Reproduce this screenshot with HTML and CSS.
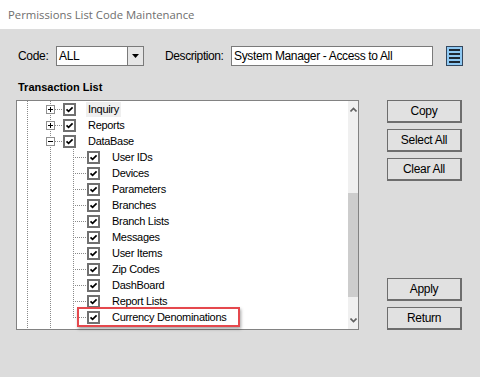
FILE: index.html
```html
<!DOCTYPE html>
<html lang="en">
<head>
    <meta charset="UTF-8">
    <title>Permissions List Code Maintenance</title>
    <link rel="stylesheet" href="styles.css">
</head>
<body>
    <div class="titlebar">Permissions List Code Maintenance</div>

    <div class="dialog">
        <div class="header">
            <span class="lbl-code">Code:</span>
            <div class="combo">
                <span class="combo-text">ALL</span>
                <span class="combo-btn">
                    <svg width="7" height="4" viewBox="0 0 7 4"><path d="M0 0h7L3.5 4z" fill="#000"/></svg>
                </span>
            </div>
            <span class="lbl-desc">Description:</span>
            <div class="textbox">System Manager - Access to All</div>
            <span class="list-icon">
                <svg width="17" height="20" viewBox="0 0 17 20">
                    <rect x="0.5" y="0.5" width="16" height="19" fill="#8ec8f2" stroke="#34475e"/>
                    <rect x="3" y="3" width="11" height="2" fill="#1d2833"/>
                    <rect x="3" y="7" width="11" height="2" fill="#1d2833"/>
                    <rect x="3" y="11" width="11" height="2" fill="#1d2833"/>
                    <rect x="3" y="15" width="11" height="2" fill="#1d2833"/>
                </svg>
            </span>
        </div>

        <div class="section-title">Transaction List</div>

        <div class="main">
            <div class="tree">
                <div class="tree-body">
                    <div class="row">
                        <span class="gut"></span>
                        <span class="branch"><svg class="exp" width="9" height="9" viewBox="0 0 9 9"><rect x="0.5" y="0.5" width="8" height="8" fill="#fff" stroke="#8f8f8f"/><path d="M2 4.5h5M4.5 2v5" stroke="#000"/></svg><i class="hline"></i></span>
                        <span class="chk"></span>
                        <span class="lbl selected">Inquiry</span>
                    </div>
                    <div class="row">
                        <span class="gut"></span>
                        <span class="branch"><svg class="exp" width="9" height="9" viewBox="0 0 9 9"><rect x="0.5" y="0.5" width="8" height="8" fill="#fff" stroke="#8f8f8f"/><path d="M2 4.5h5M4.5 2v5" stroke="#000"/></svg><i class="hline"></i></span>
                        <span class="chk"></span>
                        <span class="lbl">Reports</span>
                    </div>
                    <div class="row">
                        <span class="gut"></span>
                        <span class="branch"><svg class="exp" width="9" height="9" viewBox="0 0 9 9"><rect x="0.5" y="0.5" width="8" height="8" fill="#fff" stroke="#8f8f8f"/><path d="M2 4.5h5" stroke="#000"/></svg><i class="hline"></i></span>
                        <span class="chk"></span>
                        <span class="lbl">DataBase</span>
                    </div>
                    <div class="row"><span class="gut"></span><span class="gut"></span><span class="leaf"></span><span class="chk"></span><span class="lbl">User IDs</span></div>
                    <div class="row"><span class="gut"></span><span class="gut"></span><span class="leaf"></span><span class="chk"></span><span class="lbl">Devices</span></div>
                    <div class="row"><span class="gut"></span><span class="gut"></span><span class="leaf"></span><span class="chk"></span><span class="lbl">Parameters</span></div>
                    <div class="row"><span class="gut"></span><span class="gut"></span><span class="leaf"></span><span class="chk"></span><span class="lbl">Branches</span></div>
                    <div class="row"><span class="gut"></span><span class="gut"></span><span class="leaf"></span><span class="chk"></span><span class="lbl">Branch Lists</span></div>
                    <div class="row"><span class="gut"></span><span class="gut"></span><span class="leaf"></span><span class="chk"></span><span class="lbl">Messages</span></div>
                    <div class="row"><span class="gut"></span><span class="gut"></span><span class="leaf"></span><span class="chk"></span><span class="lbl">User Items</span></div>
                    <div class="row"><span class="gut"></span><span class="gut"></span><span class="leaf"></span><span class="chk"></span><span class="lbl">Zip Codes</span></div>
                    <div class="row"><span class="gut"></span><span class="gut"></span><span class="leaf"></span><span class="chk"></span><span class="lbl">DashBoard</span></div>
                    <div class="row"><span class="gut"></span><span class="gut"></span><span class="leaf"></span><span class="chk"></span><span class="lbl">Report Lists</span></div>
                    <div class="row">
                        <span class="gut"></span><span class="gut"></span><span class="leaf last"></span><span class="chk"></span><span class="lbl">Currency Denominations</span>
                        <span class="callout"></span>
                    </div>
                </div>
                <div class="scrollbar">
                    <div class="sb-btn">
                        <svg width="7" height="5" viewBox="0 0 7 5"><path d="M0.5 4.5L3.5 1.5L6.5 4.5" fill="none" stroke="#606060" stroke-width="1.6"/></svg>
                    </div>
                    <div class="sb-track"><div class="sb-thumb"></div></div>
                    <div class="sb-btn">
                        <svg width="7" height="5" viewBox="0 0 7 5"><path d="M0.5 0.5L3.5 3.5L6.5 0.5" fill="none" stroke="#606060" stroke-width="1.6"/></svg>
                    </div>
                </div>
            </div>

            <div class="buttons">
                <div class="btn-group">
                    <button>Copy</button>
                    <button>Select All</button>
                    <button>Clear All</button>
                </div>
                <div class="btn-group">
                    <button>Apply</button>
                    <button>Return</button>
                </div>
            </div>
        </div>
    </div>
</body>
</html>
```

FILE: styles.css
```css
body {
    margin: 0;
    width: 480px;
    height: 377px;
    background-color: #dcdcdc;
    font-family: "Liberation Sans", Arial, sans-serif;
    font-size: 12px;
    color: #000;
    overflow: hidden;
}

.titlebar {
    height: 29px;
    background-color: #fff;
    color: #6e6e6e;
    font-family: "Open Sans", sans-serif;
    font-size: 11.3px;
    line-height: 29px;
    padding-left: 8px;
}

.dialog {
    padding: 17px 0 0 16px;
}

/* Code / Description row */
.header {
    display: flex;
    align-items: center;
    height: 20px;
    padding-left: 2px;
}

.lbl-code {
    width: 38px;
    letter-spacing: -0.3px;
}

.combo {
    display: flex;
    width: 88px;
    height: 20px;
    box-sizing: border-box;
    border: 1px solid #7a7a7a;
    background-color: #fff;
}

.combo-text {
    flex: 1;
    padding-left: 2px;
    line-height: 18px;
    letter-spacing: -0.3px;
}

.combo-btn {
    width: 15px;
    border-left: 1px solid #7a7a7a;
    background-color: #e6e6e6;
    display: flex;
    align-items: center;
    justify-content: center;
}

.lbl-desc {
    width: 66px;
    margin-left: 21px;
    letter-spacing: -0.4px;
}

.textbox {
    width: 202px;
    height: 20px;
    box-sizing: border-box;
    border: 1px solid #7a7a7a;
    background-color: #fff;
    padding-left: 2px;
    line-height: 18px;
    letter-spacing: -0.35px;
}

.list-icon {
    margin-left: 13px;
    display: flex;
}

.section-title {
    font-weight: bold;
    font-size: 11px;
    line-height: 14px;
    margin: 14px 0 0 2px;
}

/* Tree + buttons */
.main {
    display: flex;
    margin-top: 6px;
}

.tree {
    display: flex;
    width: 343px;
    height: 230px;
    box-sizing: border-box;
    border: 1px solid #828282;
    background-color: #fff;
}

.tree-body {
    flex: 1;
    background-image:
        repeating-linear-gradient(to bottom, #8a8a8a 0 1px, transparent 1px 2px),
        repeating-linear-gradient(to bottom, #8a8a8a 0 1px, transparent 1px 2px);
    background-size: 1px 100%, 1px 100%;
    background-position: 10px 0, 33px 0;
    background-repeat: no-repeat;
}

.row {
    position: relative;
    display: flex;
    align-items: center;
    height: 16px;
    font-size: 11px;
    letter-spacing: -0.3px;
}

.gut {
    width: 23px;
    height: 16px;
    flex: none;
}

.branch {
    display: flex;
    align-items: center;
    width: 23px;
    height: 16px;
    flex: none;
}

.exp {
    margin-left: 6px;
    flex: none;
}

.hline {
    flex: 1;
    height: 1px;
    background-image: repeating-linear-gradient(to right, #8a8a8a 0 1px, transparent 1px 2px);
}

.leaf {
    width: 24px;
    height: 16px;
    flex: none;
    background-image:
        repeating-linear-gradient(to bottom, #8a8a8a 0 1px, transparent 1px 2px),
        repeating-linear-gradient(to right, #8a8a8a 0 1px, transparent 1px 2px);
    background-size: 1px 16px, 14px 1px;
    background-position: 10px 0, 10px 8px;
    background-repeat: no-repeat;
}

.leaf.last {
    background-size: 1px 9px, 14px 1px;
}

.chk {
    width: 13px;
    height: 13px;
    flex: none;
    box-sizing: border-box;
    border: 2px solid #707070;
    background: #fff url("data:image/svg+xml,%3Csvg xmlns='http://www.w3.org/2000/svg' width='9' height='9' viewBox='0 0 9 9'%3E%3Cpath d='M1.5 4.3L3.6 6.4L7.6 2.4' fill='none' stroke='%23000' stroke-width='1.7'/%3E%3C/svg%3E") center no-repeat;
}

.lbl {
    margin-left: 10px;
    padding: 0 2px;
    line-height: 15px;
    white-space: nowrap;
}

.lbl.selected {
    background-color: #efefef;
}

/* red annotation around the last row */
.callout {
    position: absolute;
    left: 60px;
    top: -2px;
    width: 163px;
    height: 20px;
    box-sizing: border-box;
    border: 2px solid #e5484d;
    box-shadow: 1px 2px 3px rgba(0, 0, 0, 0.35);
}

.scrollbar {
    width: 10px;
    display: flex;
    flex-direction: column;
    background-color: #f0f0f0;
}

.sb-btn {
    height: 17px;
    display: flex;
    align-items: center;
    justify-content: center;
}

.sb-track {
    flex: 1;
    padding-top: 75px;
}

.sb-thumb {
    height: 104px;
    background-color: #cdcdcd;
}

.buttons {
    display: flex;
    flex-direction: column;
    justify-content: space-between;
    margin-left: 28px;
    height: 230px;
}

.btn-group {
    display: flex;
    flex-direction: column;
    gap: 6px;
}

button {
    width: 75px;
    height: 23px;
    padding: 0;
    background-color: #e1e1e1;
    border-style: solid;
    border-color: #6d6d6d;
    border-width: 1px 2px 2px 1px;
    font-family: "Liberation Sans", Arial, sans-serif;
    font-size: 12px;
    letter-spacing: -0.3px;
    color: #000;
}
```
